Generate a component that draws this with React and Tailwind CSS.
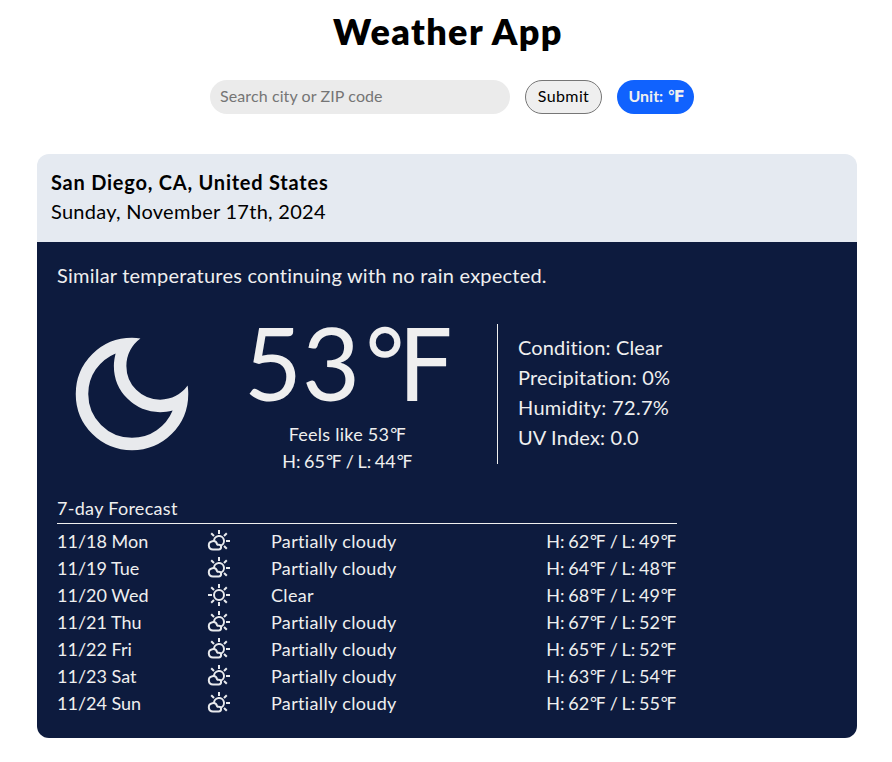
import React from 'react';

const forecast = [
  ['11/18 Mon', 'Partially cloudy', 62, 49],
  ['11/19 Tue', 'Partially cloudy', 64, 48],
  ['11/20 Wed', 'Clear', 68, 49],
  ['11/21 Thu', 'Partially cloudy', 67, 52],
  ['11/22 Fri', 'Partially cloudy', 65, 52],
  ['11/23 Sat', 'Partially cloudy', 63, 54],
  ['11/24 Sun', 'Partially cloudy', 62, 55],
];

function Moon() {
  return (
    <svg viewBox="0 0 24 24" className="size-[150px] shrink-0 fill-[#e8eaed]">
      <path d="M12 21q-3.75 0-6.375-2.625T3 12t2.625-6.375T12 3q.35 0 .688.025t.662.075q-1.025.725-1.638 1.888T11.1 7.5q0 2.25 1.575 3.825T16.5 12.9q1.375 0 2.525-.613T20.9 10.65q.05.325.075.662T21 12q0 3.75-2.625 6.375T12 21Zm0-2q2.2 0 3.95-1.213t2.55-3.162q-.5.125-1 .2t-1 .075q-3.075 0-5.238-2.163T9.1 7.5q0-.5.075-1t.2-1q-1.95.8-3.163 2.55T5 12q0 2.9 2.05 4.95T12 19Z" />
    </svg>
  );
}

function Sun() {
  return (
    <svg viewBox="0 0 24 24" className="size-6 fill-none stroke-[#e8eaed] stroke-2">
      <circle cx="12" cy="12" r="5" />
      <path d="M12 1v4M12 19v4M1 12h4M19 12h4M4.2 4.2l2.8 2.8M17 17l2.8 2.8M4.2 19.8L7 17M17 7l2.8-2.8" />
    </svg>
  );
}

function CloudSun() {
  return (
    <svg viewBox="0 0 24 24" className="size-6 fill-none stroke-[#e8eaed] stroke-2">
      <path d="M12 1v4M19 12h4M4.2 4.2l2.8 2.8M17 17l2.8 2.8M17 7l2.8-2.8" />
      <path d="M7 12.2A5 5 0 1 1 13.2 16.9" />
      <path d="M6 20.5a4.2 4.2 0 1 1 4.1-5.2l.4.4h1.2a2.4 2.4 0 0 1 0 4.8Z" />
    </svg>
  );
}

function F() {
  return <span className="font-['Liberation_Sans','DejaVu_Sans',sans-serif] tracking-normal">℉</span>;
}

export default function App() {
  return (
    <div className="flex h-[762px] flex-col items-center bg-white pr-px pl-[3px] font-[Lato,sans-serif] text-black">
      <h1 className="mt-1 pl-[2px] text-[36px] leading-[54px] font-extrabold tracking-[1.4px]">Weather App</h1>
      <form className="mt-[22px] ml-[10px] flex h-[34px] gap-[15px]">
        <input
          placeholder="Search city or ZIP code"
          className="w-[300px] rounded-[17px] bg-[#ebebeb] px-[10px] pb-0.5 text-base tracking-[0.1px] placeholder:text-[#757575]"
        />
        <button type="button" className="w-[77px] rounded-[17px] border border-[#767676] bg-[#efefef] pb-0.5 text-base tracking-[0.4px]">
          Submit
        </button>
        <button type="button" className="w-[77px] rounded-[17px] bg-[#1062fe] pb-px pl-0.5 text-base font-bold whitespace-nowrap text-[#efefef]">
          Unit: <F />
        </button>
      </form>
      <main className="mt-10 flex h-[584px] w-[820px] flex-col text-[#efefef]">
        <header className="h-[88px] shrink-0 rounded-t-xl bg-[#e5eaf1] px-[14px] pt-[13px] text-xl leading-[30px] text-black">
          <h2 className="font-bold tracking-[0.77px]">San Diego, CA, United States</h2>
          <p className="-mt-px tracking-[0.27px]">Sunday, November 17th, 2024</p>
        </header>
        <section className="grow rounded-b-xl bg-[#0d1b3e] px-5 pt-[18px]">
          <p className="text-xl leading-[30px] tracking-[0.22px]">Similar temperatures continuing with no rain expected.</p>
          <div className="mt-[29px] flex h-[152px]">
            <Moon />
            <div className="flex w-[280px] flex-col items-center pl-px text-lg leading-[27px]">
              <p className="-mt-[3px] h-[105px] shrink-0 pl-1 text-[100px] leading-[92px] whitespace-nowrap">53<F /></p>
              <p className="tracking-[0.25px]">Feels like 53<F /></p>
              <p className="-mt-px [word-spacing:-1px]">H: 65<F /> / L: 44<F /></p>
            </div>
            <ul className="mt-[5px] ml-[10px] h-[140px] border-l border-[#efefef] pt-2 pl-5 text-xl leading-[30px] tracking-[0.15px]">
              <li>Condition: Clear</li>
              <li className="tracking-[0.2px]">Precipitation: 0%</li>
              <li className="tracking-[0.3px]">Humidity: 72.7%</li>
              <li>UV Index: 0.0</li>
            </ul>
          </div>
          <div className="mt-6 w-[620px] text-lg leading-[27px]">
            <h3 className="h-[29px] border-b border-[#efefef] tracking-[0.3px]">7-day Forecast</h3>
            <ul className="pt-1">
              {forecast.map(([day, condition, high, low]) => (
                <li key={day} className="grid h-[27px] grid-cols-[150px_64px_1fr_auto]">
                  <span>{day}</span>
                  <span className="pt-px">{condition === 'Clear' ? <Sun /> : <CloudSun />}</span>
                  <span className="tracking-[0.35px]">{condition}</span>
                  <span className="[word-spacing:-1px]">H: {high}<F /> / L: {low}<F /></span>
                </li>
              ))}
            </ul>
          </div>
        </section>
      </main>
    </div>
  );
}
